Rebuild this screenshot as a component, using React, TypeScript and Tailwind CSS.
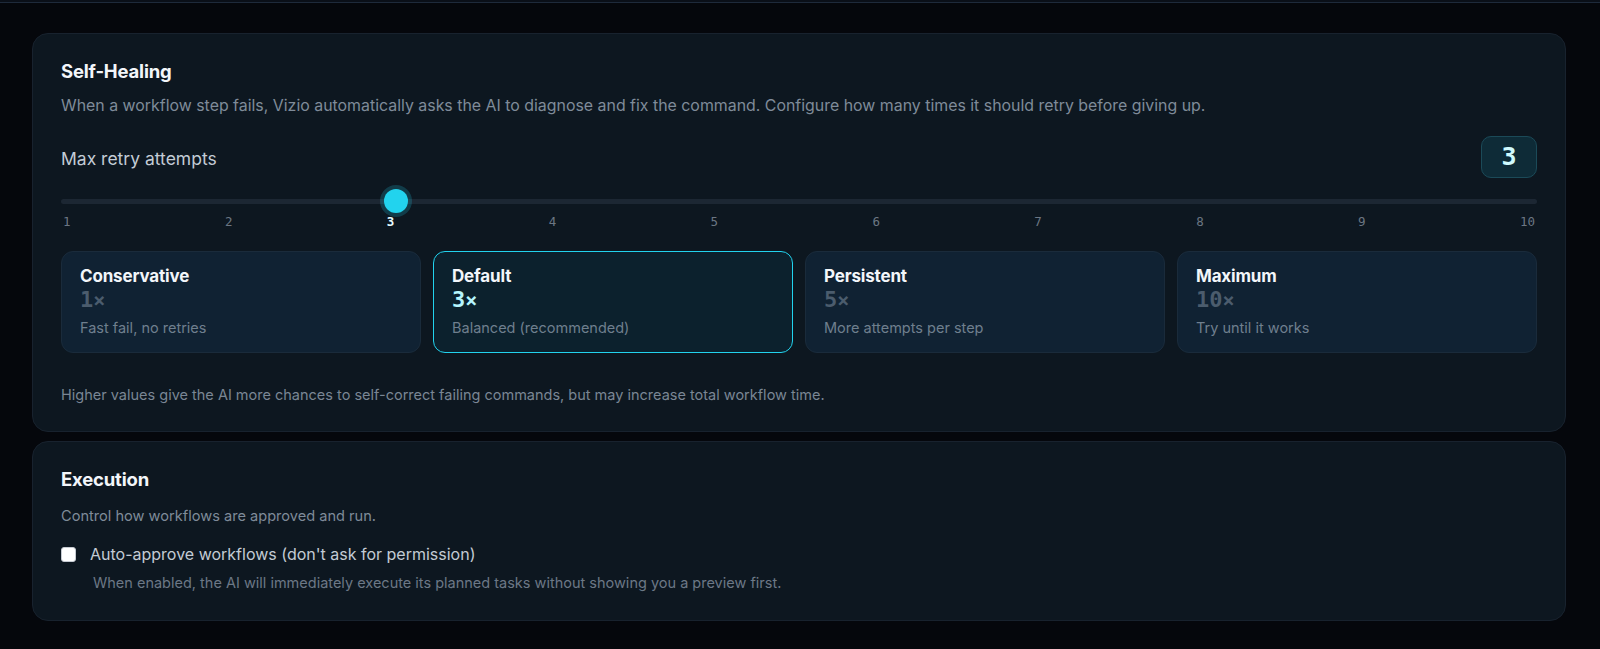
import React from "react";

const sans = { fontFamily: "Inter, 'Noto Sans', sans-serif" };

type Preset = { name: string; value: number; desc: string };

const presets: Preset[] = [
  { name: "Conservative", value: 1, desc: "Fast fail, no retries" },
  { name: "Default", value: 3, desc: "Balanced (recommended)" },
  { name: "Persistent", value: 5, desc: "More attempts per step" },
  { name: "Maximum", value: 10, desc: "Try until it works" },
];

const MIN = 1;
const MAX = 10;

function RetrySlider({ value }: { value: number }) {
  const frac = (value - MIN) / (MAX - MIN);
  const ticks = Array.from({ length: MAX - MIN + 1 }, (_, i) => i + MIN);
  return (
    <div>
      <div className="relative h-6 flex items-center">
        <div className="w-full h-[5px] rounded-full bg-[#1c2733]" />
        <div
          className="absolute top-0 w-6 h-6 rounded-full bg-[#22d3ee] shadow-[0_0_0_4px_rgba(34,211,238,0.2)]"
          style={{ left: `calc(${frac} * (100% - 24px))` }}
        />
      </div>
      <div className="flex justify-between font-['DejaVu_Sans_Mono',monospace] text-[12.5px] leading-[18px] px-[2px]">
        {ticks.map((t) => (
          <span
            key={t}
            className={t === value ? "text-[#e6fbff] font-bold" : "text-[#6b7683]"}
          >
            {t}
          </span>
        ))}
      </div>
    </div>
  );
}

function PresetCard({ preset, active }: { preset: Preset; active: boolean }) {
  return (
    <div
      className={
        "rounded-xl border px-[18px] pt-[13px] pb-[14px] " +
        (active
          ? "border-[#22d3ee] bg-[#0c212d]"
          : "border-[#1a2b3b] bg-[#102233]")
      }
    >
      <div className="text-[17px] leading-[22px] font-bold text-[#f3f6fa] tracking-[-0.01em]">
        {preset.name}
      </div>
      <div
        className={
          "font-['DejaVu_Sans_Mono',monospace] font-bold text-[22px] leading-[26px] " +
          (active ? "text-[#b5f5fd]" : "text-[#4b5c6d]")
        }
      >
        {preset.value}
        <span className="text-[20px]">×</span>
      </div>
      <div className="mt-[5px] text-[14.5px] leading-5 text-[#6f7f8e]">{preset.desc}</div>
    </div>
  );
}

export default function App() {
  const value = 3;
  return (
    <div className="min-h-screen bg-[#05070c]" style={sans}>
      <div className="h-[3px] bg-[#0a0f18] border-b border-[#1e2a3b]" />
      <div className="pl-8 pr-[34px] pt-[30px] flex flex-col gap-[9px]">
        {/* Self-healing settings */}
        <section className="rounded-2xl border border-[#18222e] bg-[#0d1720] px-7 pt-[23px] pb-[26px]">
          <h2 className="text-[18.5px] leading-7 font-bold text-[#f3f6fa] tracking-[-0.01em]">
            Self-Healing
          </h2>
          <p className="mt-[10px] text-[15.9px] leading-[22px] text-[#7f8b99]">
            When a workflow step fails, Vizio automatically asks the AI to diagnose and fix the
            command. Configure how many times it should retry before giving up.
          </p>
          <div className="mt-[19px] flex items-center justify-between h-[42px]">
            <span className="pt-1 text-[17.5px] text-[#c3ccd6]">Max retry attempts</span>
            <div className="w-14 h-[42px] rounded-[10px] border border-[#1b4a58] bg-[#0e2b37] flex items-center justify-center font-['DejaVu_Sans_Mono',monospace] font-bold text-[25px] text-[#cffafe]">
              {value}
            </div>
          </div>
          <div className="mt-[11px]">
            <RetrySlider value={value} />
          </div>
          <div className="mt-[20px] grid grid-cols-4 gap-3">
            {presets.map((p) => (
              <PresetCard key={p.name} preset={p} active={p.value === value} />
            ))}
          </div>
          <p className="mt-[32px] text-[14.5px] leading-5 text-[#7a8694]">
            Higher values give the AI more chances to self-correct failing commands, but may
            increase total workflow time.
          </p>
        </section>

        {/* Execution settings */}
        <section className="rounded-2xl border border-[#18222e] bg-[#0d1720] px-7 pt-[23px] pb-[27px]">
          <h2 className="text-[18.5px] leading-7 font-bold text-[#f3f6fa] tracking-[-0.01em]">
            Execution
          </h2>
          <p className="mt-[12px] text-[14.6px] leading-[22px] text-[#7f8b99]">
            Control how workflows are approved and run.
          </p>
          <label className="mt-[16px] flex items-center gap-[14px]">
            <span className="w-[15px] h-[15px] rounded-[3px] bg-white border border-[#c5cad1]" />
            <span className="text-[16px] leading-[22px] text-[#c3cbd4]">
              Auto-approve workflows (don't ask for permission)
            </span>
          </label>
          <p className="mt-[8px] pl-8 text-[14.5px] leading-5 text-[#6c7886]">
            When enabled, the AI will immediately execute its planned tasks without showing you a
            preview first.
          </p>
        </section>
      </div>
    </div>
  );
}
